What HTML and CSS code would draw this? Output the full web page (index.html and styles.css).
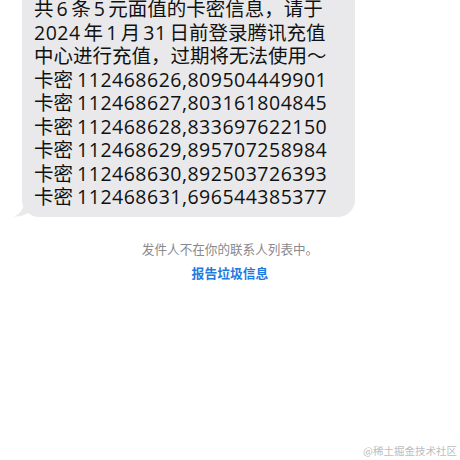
FILE: index.html
```html
<!DOCTYPE html>
<html lang="zh-CN">
<head>
<meta charset="utf-8">
<link rel="stylesheet" href="styles.css">
</head>
<body>
<div class="screen">
  <div class="thread">
    <div class="bubble">
      <p class="msg">共<span class="n">6</span>条<span class="n">5</span>元面值的卡密信息，请于<br><span class="n first">2024</span>年<span class="n">1</span>月<span class="n">31</span>日前登录腾讯充值<br>中心进行充值，过期将无法使用～<br>卡密 <span class="code">112468626,809504449901</span><br>卡密 <span class="code">112468627,803161804845</span><br>卡密 <span class="code">112468628,833697622150</span><br>卡密 <span class="code">112468629,895707258984</span><br>卡密 <span class="code">112468630,892503726393</span><br>卡密 <span class="code">112468631,696544385377</span></p>
      <svg class="tail" width="14" height="16" viewBox="0 0 14 16"><path d="M10 0 C10 8 6 13 0 15.5 C5 16 10 14.5 14 12 L14 0 Z" fill="#e9e9eb"/></svg>
    </div>
    <div class="notice">
      <p class="notice-text">发件人不在你的联系人列表中。</p>
      <p class="report">报告垃圾信息</p>
    </div>
  </div>
  <div class="watermark">@稀土掘金技术社区</div>
</div>
</body>
</html>
```
FILE: styles.css
```css
* { box-sizing: border-box; }
html, body { margin: 0; padding: 0; background: #fff; }
.screen {
  width: 460px;
  height: 460px;
  overflow: hidden;
  display: flex;
  flex-direction: column;
  font-family: "Open Sans", "Noto Sans CJK SC", sans-serif;
}
.thread {
  flex: 1;
  display: flex;
  flex-direction: column;
}
.bubble {
  position: relative;
  margin: -12px 0 0 22px;
  width: 333px;
  padding: 9px 10px 8px 12px;
  background: #e9e9eb;
  border-radius: 0 0 17px 17px;
}
.msg {
  margin: 0;
  font-size: 19.5px;
  line-height: 23.5px;
  color: #111;
  white-space: nowrap;
  word-spacing: -1px;
}
.n {
  padding: 0 3px;
  letter-spacing: 0.5px;
}
.n.first { padding-left: 0; }
.code {
  letter-spacing: 0.5px;
}
.tail {
  position: absolute;
  left: -8px;
  bottom: 0;
}
.notice {
  margin-top: 23px;
  display: flex;
  flex-direction: column;
  align-items: center;
  gap: 6px;
}
.notice p { margin: 0; }
.notice-text {
  font-size: 12.6px;
  line-height: 18px;
  color: #8a8a8e;
  font-family: "Noto Sans CJK SC", sans-serif;
}
.report {
  font-size: 12.8px;
  line-height: 18px;
  color: #1f7ae0;
  font-weight: 700;
  font-family: "Noto Sans CJK SC", sans-serif;
}
.watermark {
  align-self: flex-end;
  margin: 0 3px 2px 0;
  font-size: 10.5px;
  line-height: 14px;
  color: #bdbdbd;
  font-family: "Noto Sans CJK SC", sans-serif;
}
```
